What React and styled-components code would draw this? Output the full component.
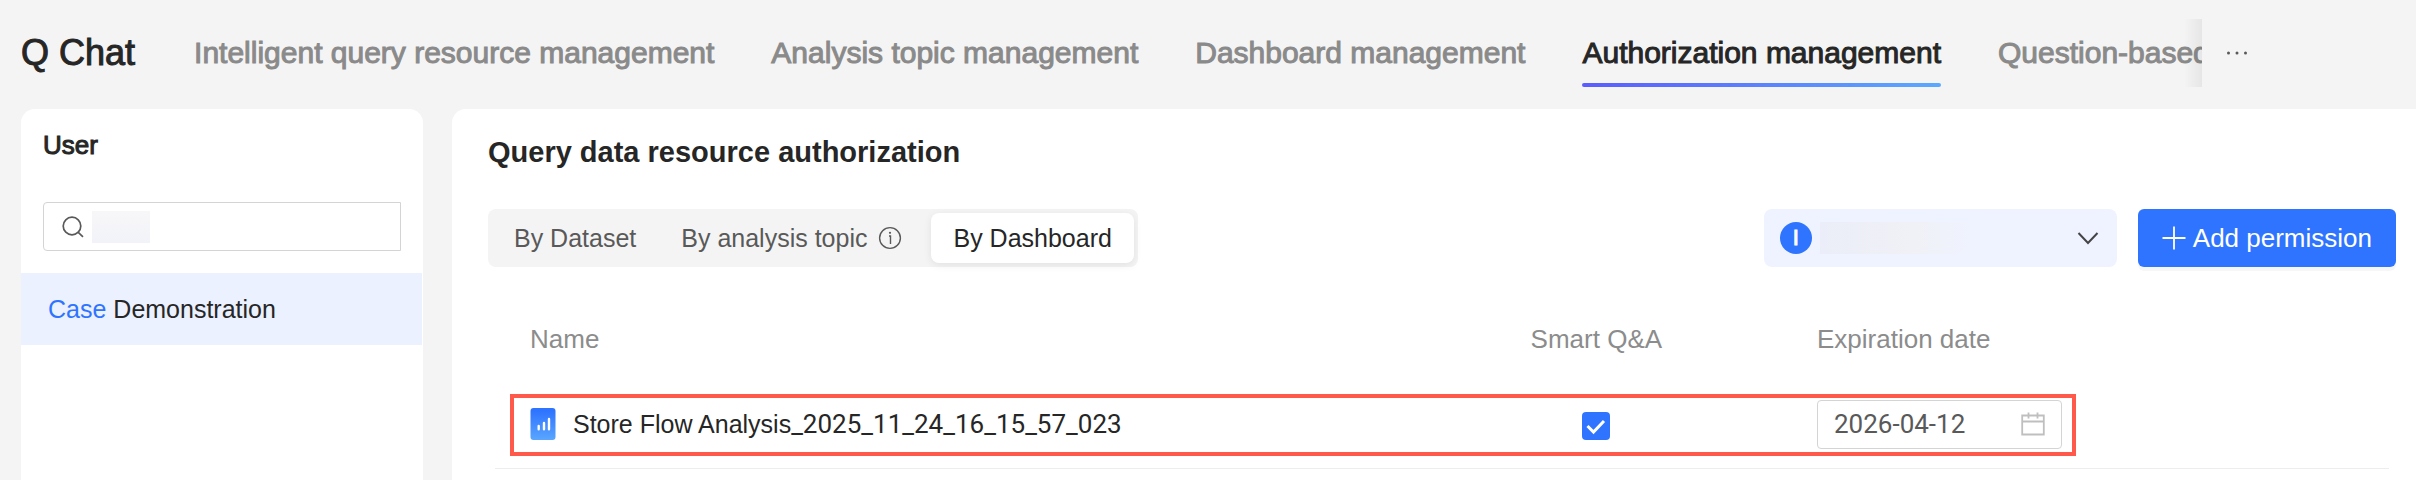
import React, { useState } from 'react';
import styled, { createGlobalStyle } from 'styled-components';

const tabs = [
    'Intelligent query resource management',
    'Analysis topic management',
    'Dashboard management',
    'Authorization management',
    'Question-based',
];

function SearchIcon() {
    return (
        <svg width="22" height="22" viewBox="0 0 22 22" fill="none" stroke="#595959" strokeWidth="1.7">
            <circle cx="10" cy="10" r="8.8" />
            <path d="M16 16.2l5 4.6" />
        </svg>
    );
}

function InfoIcon() {
    return (
        <svg width="24" height="24" viewBox="0 0 24 24" fill="none" stroke="#595959" strokeWidth="1.4">
            <circle cx="12" cy="12" r="10.4" />
            <path d="M11 10h1.5v8" />
            <circle cx="12" cy="6.8" r="1.1" fill="#595959" stroke="none" />
        </svg>
    );
}

function ChevronIcon() {
    return (
        <svg width="22" height="22" viewBox="0 0 22 22" fill="none" stroke="#454545" strokeWidth="2">
            <path d="M1.5 6l9.5 10L20.5 6" />
        </svg>
    );
}

function PlusIcon() {
    return (
        <svg width="24" height="24" viewBox="0 0 24 24" fill="none" stroke="#fff" strokeWidth="1.8">
            <path d="M12 0.5v23M0.5 12h23" />
        </svg>
    );
}

function DashboardIcon() {
    return (
        <svg width="26" height="32" viewBox="0 0 26 32">
            <defs>
                <linearGradient id="dashboardFill" x1="0" y1="0" x2="0" y2="1">
                    <stop offset="0.1" stopColor="#2f74ff" />
                    <stop offset="1" stopColor="#5aa6ff" />
                </linearGradient>
            </defs>
            <rect x="0.5" width="25" height="32" rx="3" fill="url(#dashboardFill)" />
            <path d="M8.7 18v3.2M14 15v6.2M19 11v10.2" stroke="#fff" strokeWidth="2.4" strokeLinecap="round" />
        </svg>
    );
}

function CheckIcon() {
    return (
        <svg width="28" height="28" viewBox="0 0 28 28" fill="none" stroke="#fff" strokeWidth="3">
            <path d="M5.5 14l6 6L22 9" />
        </svg>
    );
}

function CalendarIcon() {
    return (
        <svg width="24" height="24" viewBox="0 0 24 24" fill="none" stroke="#bfbfbf" strokeWidth="1.8">
            <path d="M1.2 3.5h21.6v19H1.2zM1.2 9.5h21.6M7.5 0.5v6M16.5 0.5v6" />
        </svg>
    );
}

function Header() {
    return (
        <HeaderBar>
            <Brand>Q Chat</Brand>
            <TabList>
                {tabs.map((tab) => (
                    <Tab key={tab} href="#" $active={tab === 'Authorization management'}>{tab}</Tab>
                ))}
            </TabList>
            <MoreButton aria-label="More tabs">
                <svg width="22" height="4" viewBox="0 0 22 4" fill="#595959">
                    <circle cx="2.5" cy="2" r="1.5" />
                    <circle cx="11" cy="2" r="1.5" />
                    <circle cx="19.5" cy="2" r="1.5" />
                </svg>
            </MoreButton>
        </HeaderBar>
    );
}

function Sidebar() {
    return (
        <SidePanel>
            <SideTitle>User</SideTitle>
            <SearchBox>
                <SearchIcon />
                <Redacted $width="58px" />
                <SearchInput type="text" aria-label="Search user" />
            </SearchBox>
            <UserItem href="#"><mark>Case</mark> Demonstration</UserItem>
        </SidePanel>
    );
}

function Toolbar() {
    return (
        <ToolbarRow>
            <Segmented>
                <Segment>By Dataset</Segment>
                <Segment>By analysis topic <InfoIcon /></Segment>
                <Segment $active>By Dashboard</Segment>
            </Segmented>
            <Actions>
                <UserSelect>
                    <Avatar>I</Avatar>
                    <Redacted $width="154px" $fade />
                    <select aria-label="Account">
                        <option></option>
                    </select>
                    <ChevronIcon />
                </UserSelect>
                <AddButton><PlusIcon />Add permission</AddButton>
            </Actions>
        </ToolbarRow>
    );
}

function ResourceTable() {
    const [checked, setChecked] = useState(true);
    const [date, setDate] = useState('2026-04-12');

    return (
        <TableWrap>
            <Table>
                <thead>
                    <tr>
                        <HeadCell $width="46.5%" $indent>Name</HeadCell>
                        <HeadCell $width="23.3%" $center>Smart Q&amp;A</HeadCell>
                        <HeadCell>Expiration date</HeadCell>
                    </tr>
                </thead>
                <tbody>
                    <tr>
                        <Cell $indent>
                            <Resource>
                                <DashboardIcon />
                                <span>Store Flow Analysis<Digits>_2025_11_24_16_15_57_023</Digits></span>
                            </Resource>
                        </Cell>
                        <Cell $center>
                            <Checkbox>
                                <input
                                    type="checkbox"
                                    aria-label="Smart Q&A"
                                    checked={checked}
                                    onChange={(e) => setChecked(e.target.checked)}
                                />
                                {checked && <CheckIcon />}
                            </Checkbox>
                        </Cell>
                        <Cell>
                            <DateBox>
                                <DateInput
                                    type="text"
                                    aria-label="Expiration date"
                                    value={date}
                                    onChange={(e) => setDate(e.target.value)}
                                />
                                <CalendarIcon />
                            </DateBox>
                        </Cell>
                    </tr>
                </tbody>
            </Table>
            <Highlight />
        </TableWrap>
    );
}

function App() {
    return (
        <Page>
            <GlobalStyle />
            <Header />
            <Body>
                <Sidebar />
                <MainPanel>
                    <MainTitle>Query data resource authorization</MainTitle>
                    <Toolbar />
                    <ResourceTable />
                </MainPanel>
            </Body>
        </Page>
    );
}

export default App;


const GlobalStyle = createGlobalStyle`
    * {
        box-sizing: border-box;
    }

    body {
        margin: 0;
        background: #f4f4f4;
        color: #262626;
        font-family: "Liberation Sans", Arial, sans-serif;
        font-size: 26px;
    }

    button, input, select {
        font: inherit;
        color: inherit;
        border: 0;
        padding: 0;
        background: none;
    }

    a {
        color: inherit;
        text-decoration: none;
    }

    svg {
        display: block;
        flex: none;
    }
`;

const Page = styled.div`
    display: flex;
    flex-direction: column;
    min-height: 100vh;
`;

/* Header */
const HeaderBar = styled.header`
    display: flex;
    align-items: center;
    padding: 19px 0 22px 21px;
`;

const Brand = styled.h1`
    margin: 0 59px 0 0;
    font-size: 36px;
    font-weight: 400;
    line-height: 40px;
    -webkit-text-stroke: 1px;
    white-space: nowrap;
`;

const TabList = styled.nav`
    position: relative;
    display: flex;
    gap: 57px;
    flex: 1;
    min-width: 0;
    overflow: hidden;

    &::after {
        content: "";
        position: absolute;
        top: 0;
        right: 0;
        bottom: 0;
        width: 18px;
        background: linear-gradient(to right, rgba(0, 0, 0, 0), rgba(0, 0, 0, 0.06));
    }
`;

const Tab = styled.a`
    display: flex;
    flex-direction: column;
    flex: none;
    height: 68px;
    padding-top: 14px;
    font-size: 30px;
    line-height: 40px;
    color: ${(props) => (props.$active ? '#262626' : '#8a8a8a')};
    -webkit-text-stroke: 1px;
    white-space: nowrap;

    &::after {
        content: "";
        height: 4px;
        margin-top: auto;
        border-radius: 2px;
        background: ${(props) => (props.$active ? 'linear-gradient(to right, #5b5bff, #5aa9ff)' : 'none')};
    }
`;

const MoreButton = styled.button`
    width: 214px;
    padding-left: 24px;
`;

/* Panels */
const Body = styled.div`
    display: flex;
    flex: 1;
    gap: 29px;
    padding-left: 21px;
`;

const SidePanel = styled.aside`
    flex: none;
    width: 402px;
    border-radius: 14px 14px 0 0;
    background: #fff;
`;

const MainPanel = styled.main`
    flex: 1;
    min-width: 0;
    padding: 23px 20px 0 36px;
    border-radius: 14px 0 0 0;
    background: #fff;
`;

const SideTitle = styled.h2`
    margin: 0;
    padding: 20px 22px 0;
    font-size: 26px;
    font-weight: 400;
    line-height: 32px;
    -webkit-text-stroke: 1px;
`;

const SearchBox = styled.div`
    display: flex;
    align-items: center;
    gap: 8px;
    height: 49px;
    margin: 41px 22px 22px;
    padding: 0 18px;
    border: 1px solid #d4d4d4;
    border-radius: 4px 0 0 4px;
`;

const SearchInput = styled.input`
    flex: 1;
    min-width: 0;
    outline: none;
`;

const Redacted = styled.span`
    flex: none;
    width: ${(props) => props.$width};
    height: 32px;
    background: ${(props) => (props.$fade
        ? 'linear-gradient(to right, #ebedf8, #f0f1f6 60%, #eff3ff)'
        : 'linear-gradient(to bottom, #f7f7f8, #f2f3f9)')};
`;

const UserItem = styled.a`
    display: block;
    margin-right: 1px;
    padding: 0 27px;
    background: #ebf1ff;
    font-size: 25px;
    line-height: 72px;

    mark {
        background: none;
        color: #2f74ff;
    }
`;

const MainTitle = styled.h2`
    margin: 0 0 37px;
    font-size: 29px;
    font-weight: 700;
    line-height: 40px;
`;

/* Toolbar */
const ToolbarRow = styled.div`
    display: flex;
    justify-content: space-between;
`;

const Segmented = styled.div`
    display: flex;
    gap: 1px;
    padding: 4px;
    border-radius: 8px;
    background: #f4f4f4;
`;

const Segment = styled.button`
    display: flex;
    align-items: center;
    gap: 11px;
    height: 50px;
    padding: 0 22px;
    border-radius: 8px;
    font-size: 25px;
    color: ${(props) => (props.$active ? '#262626' : '#595959')};
    background: ${(props) => (props.$active ? '#fff' : 'none')};
    box-shadow: ${(props) => (props.$active ? '0 2px 8px rgba(0, 0, 0, 0.08)' : 'none')};

    svg {
        margin-right: 6px;
    }
`;

const Actions = styled.div`
    display: flex;
    gap: 21px;
`;

const UserSelect = styled.label`
    display: flex;
    align-items: center;
    gap: 8px;
    width: 353px;
    height: 58px;
    padding: 0 18px 0 16px;
    border-radius: 8px;
    background: #eff3ff;

    select {
        flex: 1;
        min-width: 0;
        appearance: none;
        outline: none;
    }
`;

const Avatar = styled.span`
    width: 32px;
    height: 32px;
    border-radius: 50%;
    background: #2f74ff;
    color: #fff;
    font-size: 22px;
    line-height: 32px;
    text-align: center;
    -webkit-text-stroke: 1px;
`;

const AddButton = styled.button`
    display: flex;
    align-items: center;
    gap: 7px;
    height: 58px;
    padding: 0 24px;
    border-radius: 6px;
    background: #2f74ff;
    box-shadow: 0 4px 0 rgba(0, 0, 0, 0.03);
    color: #fff;
    white-space: nowrap;
`;

/* Table */
const TableWrap = styled.div`
    position: relative;
    margin: 30px 7px 0;
`;

const Table = styled.table`
    width: 100%;
    border-collapse: collapse;
    table-layout: fixed;
`;

const HeadCell = styled.th`
    width: ${(props) => props.$width || 'auto'};
    height: 84px;
    padding: 0 0 0 ${(props) => (props.$indent ? '35px' : '0')};
    color: #8c8c8c;
    font-weight: 400;
    text-align: ${(props) => (props.$center ? 'center' : 'left')};
`;

const Cell = styled.td`
    height: 87px;
    padding: 0 0 0 ${(props) => (props.$indent ? '35px' : '0')};
    border-bottom: 1px solid #ededed;
    text-align: ${(props) => (props.$center ? 'center' : 'left')};
`;

const Resource = styled.div`
    display: flex;
    align-items: center;
    gap: 17px;
    font-size: 25px;
    line-height: 32px;
`;

const Digits = styled.span`
    font-family: Roboto, "Liberation Sans", sans-serif;
    font-size: 26px;
`;

const Checkbox = styled.span`
    display: inline-grid;
    vertical-align: middle;

    input {
        grid-area: 1 / 1;
        width: 28px;
        height: 28px;
        margin: 0;
        appearance: none;
        border-radius: 4px;
        background: #2f74ff;
    }

    svg {
        grid-area: 1 / 1;
        pointer-events: none;
    }
`;

const DateBox = styled.div`
    display: flex;
    align-items: center;
    width: 245px;
    height: 49px;
    padding: 0 16px;
    border: 1px solid #d4d4d4;
    border-radius: 4px;
`;

const DateInput = styled.input`
    flex: 1;
    min-width: 0;
    color: #595959;
    font-family: Roboto, "Liberation Sans", sans-serif;
    outline: none;
`;

const Highlight = styled.div`
    position: absolute;
    right: 313px;
    bottom: 13px;
    left: 15px;
    height: 62px;
    border: 4px solid #ff594c;
    pointer-events: none;
`;
